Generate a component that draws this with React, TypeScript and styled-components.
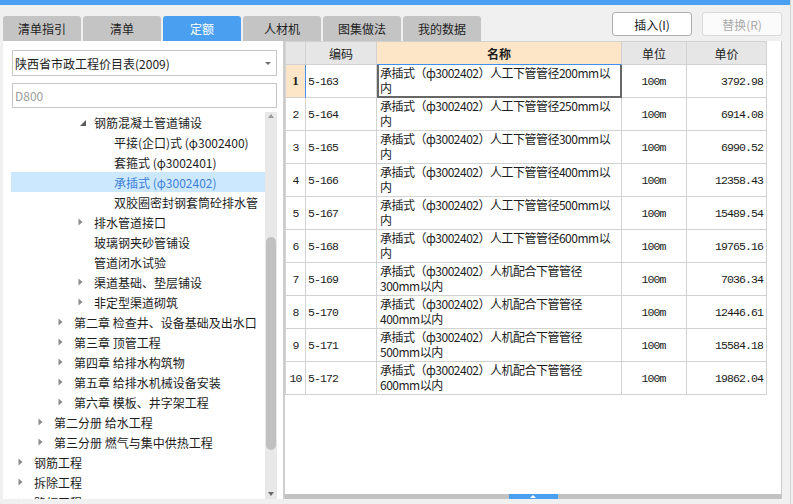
import React from "react";
import styled, { createGlobalStyle, css } from "styled-components";

const GlobalStyle = createGlobalStyle`
  html, body { margin: 0; padding: 0; background: #f0f0f0; }
  body { font-family: "Noto Sans CJK SC", "Noto Sans", sans-serif; }
  * { box-sizing: border-box; }
`;

const BLUE = "#4a9ff0";
const GRID = "#d2d2d2";

const Root = styled.div`
  width: 791px;
  height: 504px;
  background: #f0f0f0;
  border-right: 1px solid #d4d4d4;
  display: flex;
  flex-direction: column;
  overflow: hidden;
`;

const TopBar = styled.div`
  height: 5px;
  background: ${BLUE};
  flex: none;
`;

const HeaderRow = styled.div`
  height: 36px;
  display: flex;
  flex: none;
  padding-right: 8px;
`;

const Tabs = styled.div`
  display: flex;
  gap: 2px;
  padding-left: 3px;
  align-self: flex-end;
`;

const Tab = styled.div<{ $active?: boolean }>`
  width: 78px;
  height: 25px;
  border-radius: 3px 3px 0 0;
  display: flex;
  align-items: center;
  justify-content: center;
  font-size: 12px;
  color: #222222;
  background: #c4c4c4;
  ${(p) =>
    p.$active &&
    css`
      background: ${BLUE};
      color: #ffffff;
    `}
`;

const Buttons = styled.div`
  margin-left: auto;
  padding-top: 7px;
  display: flex;
  gap: 10px;
`;

const ActionButton = styled.div<{ $disabled?: boolean }>`
  width: 80px;
  height: 24px;
  border-radius: 3px;
  background: #ffffff;
  border: 1px solid #adadad;
  font-size: 12px;
  color: #1a1a1a;
  display: flex;
  align-items: center;
  justify-content: center;
  ${(p) =>
    p.$disabled &&
    css`
      border-color: #d9d9d9;
      color: #a9a9a9;
      background: #fbfbfb;
    `}
`;

const Main = styled.div`
  height: 458px;
  display: flex;
  padding-left: 3px;
  padding-right: 8px;
  flex: none;
`;

const LeftPanel = styled.div`
  width: 280px;
  background: #ffffff;
  display: flex;
  flex-direction: column;
  flex: none;
`;

const SelectBox = styled.div`
  margin: 9px 0 0 9px;
  width: 265px;
  height: 26px;
  border: 1px solid #c6c6c6;
  display: flex;
  align-items: center;
  padding-left: 2px;
  font-size: 12px;
  color: #222;
`;

const SelectArrow = styled.span`
  margin-left: auto;
  margin-right: 5px;
  width: 0;
  height: 0;
  border-left: 3px solid transparent;
  border-right: 3px solid transparent;
  border-top: 3px solid #707070;
`;

const SearchInput = styled.input`
  margin: 7px 0 0 9px;
  width: 265px;
  height: 25px;
  border: 1px solid #c6c6c6;
  padding: 0 0 0 2px;
  font-family: "Noto Sans CJK SC", "Noto Sans", sans-serif;
  font-size: 12px;
  color: #222;
  outline: none;
  &::placeholder { color: #9c9c9c; }
`;

const TreeArea = styled.div`
  margin-top: 4px;
  flex: 1;
  min-height: 0;
  display: flex;
  padding-left: 8px;
`;

const TreeList = styled.div`
  width: 254px;
  overflow: hidden;
`;

const TreeRow = styled.div<{ $level: number; $selected?: boolean }>`
  height: 20px;
  display: flex;
  align-items: center;
  padding-left: ${(p) => p.$level * 20 + 7}px;
  font-size: 12px;
  color: #1c1c1c;
  white-space: nowrap;
  ${(p) =>
    p.$selected &&
    css`
      background: #cce8ff;
      color: #3f7fd6;
    `}
`;

const ArrowBox = styled.span<{ $open?: boolean }>`
  width: 16px;
  flex: none;
  display: flex;
  align-items: center;
  padding-left: ${(p) => (p.$open ? 2 : 0)}px;
  padding-top: ${(p) => (p.$open ? 1 : 0)}px;
`;

const VScroll = styled.div`
  width: 12px;
  background: #e8e8e8;
  position: relative;
  flex: none;
`;

const ScrollArrow = styled.span<{ $down?: boolean }>`
  position: absolute;
  left: 3px;
  width: 0;
  height: 0;
  border-left: 3px solid transparent;
  border-right: 3px solid transparent;
  ${(p) =>
    p.$down
      ? css`
          bottom: 3px;
          border-top: 4px solid #6a6a6a;
        `
      : css`
          top: 2px;
          border-bottom: 4px solid #9a9a9a;
        `}
`;

const ScrollThumb = styled.div`
  position: absolute;
  left: 1px;
  width: 10px;
  top: 125px;
  height: 213px;
  border-radius: 5px;
  background: #c1c1c1;
`;

const Splitter = styled.div`
  width: 2px;
  background: #cdcdcd;
  flex: none;
`;

const RightPanel = styled.div`
  width: 497px;
  background: #ffffff;
  border-right: 1px solid #c9c9c9;
  display: flex;
  flex-direction: column;
  flex: none;
`;

const Grid = styled.div`
  display: grid;
  grid-template-columns: 21px 71px 245px 65px 80px;
`;

const HeadCell = styled.div<{ $first?: boolean; $focus?: boolean }>`
  height: 24px;
  background: #e6e6e6;
  border-top: 1px solid ${GRID};
  border-right: 1px solid ${GRID};
  border-bottom: 1px solid ${GRID};
  ${(p) => p.$first && css`border-left: 1px solid ${GRID};`}
  display: flex;
  align-items: center;
  justify-content: center;
  font-size: 12px;
  color: #1c1c1c;
  ${(p) =>
    p.$focus &&
    css`
      background: #fde6c8;
      font-weight: 700;
      border-bottom-color: #3f8fef;
    `}
`;

const Cell = styled.div<{ $first?: boolean }>`
  height: 33px;
  border-right: 1px solid ${GRID};
  border-bottom: 1px solid ${GRID};
  ${(p) => p.$first && css`border-left: 1px solid ${GRID};`}
  display: flex;
  align-items: center;
  white-space: nowrap;
  overflow: hidden;
`;

const NumCell = styled(Cell)<{ $sel?: boolean }>`
  justify-content: center;
  font-family: "Liberation Mono", monospace;
  font-size: 11.5px;
  letter-spacing: -0.9px;
  color: #222;
  ${(p) =>
    p.$sel &&
    css`
      background: #fde6c8;
      border-right-color: #3f8fef;
      font-family: "Liberation Serif", serif;
      font-weight: 700;
      font-size: 13px;
      letter-spacing: 0;
    `}
`;

const MonoCell = styled(Cell)<{ $align: "left" | "center" | "right" }>`
  font-family: "Liberation Mono", monospace;
  font-size: 11.5px;
  letter-spacing: -0.9px;
  color: #1a1a1a;
  padding: 0 3px 0 2px;
  justify-content: ${(p) =>
    p.$align === "left" ? "flex-start" : p.$align === "center" ? "center" : "flex-end"};
`;

const NameCell = styled(Cell)<{ $focus?: boolean }>`
  flex-direction: column;
  align-items: flex-start;
  justify-content: flex-start;
  padding: 0 3px 0 3px;
  font-size: 12px;
  line-height: 15px;
  letter-spacing: -0.5px;
  color: #1c1c1c;
  ${(p) =>
    p.$focus &&
    css`
      border-right-color: #676767;
      border-bottom-color: #676767;
      box-shadow: inset 2px 0 0 #676767, inset -1px 0 0 #676767, inset 0 -1px 0 #676767;
    `}
`;

const Spacer = styled.div`
  flex: 1;
`;

const HScroll = styled.div`
  height: 5px;
  background: #c2c2c2;
  display: flex;
  justify-content: center;
  flex: none;
`;

const HThumb = styled.div`
  width: 49px;
  height: 5px;
  background: ${BLUE};
  display: flex;
  align-items: center;
  justify-content: center;
`;

const HThumbArrow = styled.span`
  width: 0;
  height: 0;
  border-left: 3px solid transparent;
  border-right: 3px solid transparent;
  border-bottom: 3px solid #ffffff;
`;

type TreeItem = { level: number; label: string; arrow?: "open" | "closed"; selected?: boolean };

const tree: TreeItem[] = [
  { level: 3, label: "钢筋混凝土管道铺设", arrow: "open" },
  { level: 4, label: "平接(企口)式 (φ3002400)" },
  { level: 4, label: "套箍式 (φ3002401)" },
  { level: 4, label: "承插式 (φ3002402)", selected: true },
  { level: 4, label: "双胶圈密封钢套筒砼排水管" },
  { level: 3, label: "排水管道接口", arrow: "closed" },
  { level: 3, label: "玻璃钢夹砂管铺设" },
  { level: 3, label: "管道闭水试验" },
  { level: 3, label: "渠道基础、垫层铺设", arrow: "closed" },
  { level: 3, label: "非定型渠道砌筑", arrow: "closed" },
  { level: 2, label: "第二章 检查井、设备基础及出水口", arrow: "closed" },
  { level: 2, label: "第三章 顶管工程", arrow: "closed" },
  { level: 2, label: "第四章 给排水构筑物", arrow: "closed" },
  { level: 2, label: "第五章 给排水机械设备安装", arrow: "closed" },
  { level: 2, label: "第六章 模板、井字架工程", arrow: "closed" },
  { level: 1, label: "第二分册 给水工程", arrow: "closed" },
  { level: 1, label: "第三分册 燃气与集中供热工程", arrow: "closed" },
  { level: 0, label: "钢筋工程", arrow: "closed" },
  { level: 0, label: "拆除工程", arrow: "closed" },
  { level: 0, label: "路灯工程", arrow: "closed" },
];

type Row = { code: string; l1: string; l2: string; price: string };

const P = "承插式（ф3002402）";
const rows: Row[] = [
  { code: "5-163", l1: P + "人工下管管径200mm以", l2: "内", price: "3792.98" },
  { code: "5-164", l1: P + "人工下管管径250mm以", l2: "内", price: "6914.08" },
  { code: "5-165", l1: P + "人工下管管径300mm以", l2: "内", price: "6990.52" },
  { code: "5-166", l1: P + "人工下管管径400mm以", l2: "内", price: "12358.43" },
  { code: "5-167", l1: P + "人工下管管径500mm以", l2: "内", price: "15489.54" },
  { code: "5-168", l1: P + "人工下管管径600mm以", l2: "内", price: "19765.16" },
  { code: "5-169", l1: P + "人机配合下管管径", l2: "300mm以内", price: "7036.34" },
  { code: "5-170", l1: P + "人机配合下管管径", l2: "400mm以内", price: "12446.61" },
  { code: "5-171", l1: P + "人机配合下管管径", l2: "500mm以内", price: "15584.18" },
  { code: "5-172", l1: P + "人机配合下管管径", l2: "600mm以内", price: "19862.04" },
];

const tabs = ["清单指引", "清单", "定额", "人材机", "图集做法", "我的数据"];

function TreeArrow({ kind }: { kind?: "open" | "closed" }) {
  if (kind === "open")
    return (
      <svg width="6" height="6" viewBox="0 0 6 6">
        <path d="M6 0 L6 6 L0 6 Z" fill="#595959" />
      </svg>
    );
  if (kind === "closed")
    return (
      <svg width="5" height="8" viewBox="0 0 5 8">
        <path d="M0.5 0.5 L4.5 4 L0.5 7.5 Z" fill="#8a8a8a" />
      </svg>
    );
  return null;
}

export default function App() {
  return (
    <>
      <GlobalStyle />
      <Root>
        <TopBar />
        <HeaderRow>
          <Tabs>
            {tabs.map((t) => (
              <Tab key={t} $active={t === "定额"}>
                {t}
              </Tab>
            ))}
          </Tabs>
          <Buttons>
            <ActionButton>插入(I)</ActionButton>
            <ActionButton $disabled>替换(R)</ActionButton>
          </Buttons>
        </HeaderRow>
        <Main>
          <LeftPanel>
            <SelectBox>
              陕西省市政工程价目表(2009)
              <SelectArrow />
            </SelectBox>
            <SearchInput placeholder="D800" readOnly />
            <TreeArea>
              <TreeList>
                {tree.map((it, i) => (
                  <TreeRow key={i} $level={it.level} $selected={it.selected}>
                    <ArrowBox $open={it.arrow === "open"}>
                      <TreeArrow kind={it.arrow} />
                    </ArrowBox>
                    {it.label}
                  </TreeRow>
                ))}
              </TreeList>
              <VScroll>
                <ScrollArrow />
                <ScrollThumb />
                <ScrollArrow $down />
              </VScroll>
            </TreeArea>
          </LeftPanel>
          <Splitter />
          <RightPanel>
            <Grid>
              <HeadCell $first />
              <HeadCell>编码</HeadCell>
              <HeadCell $focus>名称</HeadCell>
              <HeadCell>单位</HeadCell>
              <HeadCell>单价</HeadCell>
              {rows.map((r, i) => (
                <React.Fragment key={r.code}>
                  <NumCell $first $sel={i === 0}>
                    {i + 1}
                  </NumCell>
                  <MonoCell $align="left">{r.code}</MonoCell>
                  <NameCell $focus={i === 0}>
                    <span>{r.l1}</span>
                    <span>{r.l2}</span>
                  </NameCell>
                  <MonoCell $align="center">100m</MonoCell>
                  <MonoCell $align="right">{r.price}</MonoCell>
                </React.Fragment>
              ))}
            </Grid>
            <Spacer />
            <HScroll>
              <HThumb>
                <HThumbArrow />
              </HThumb>
            </HScroll>
          </RightPanel>
        </Main>
      </Root>
    </>
  );
}
